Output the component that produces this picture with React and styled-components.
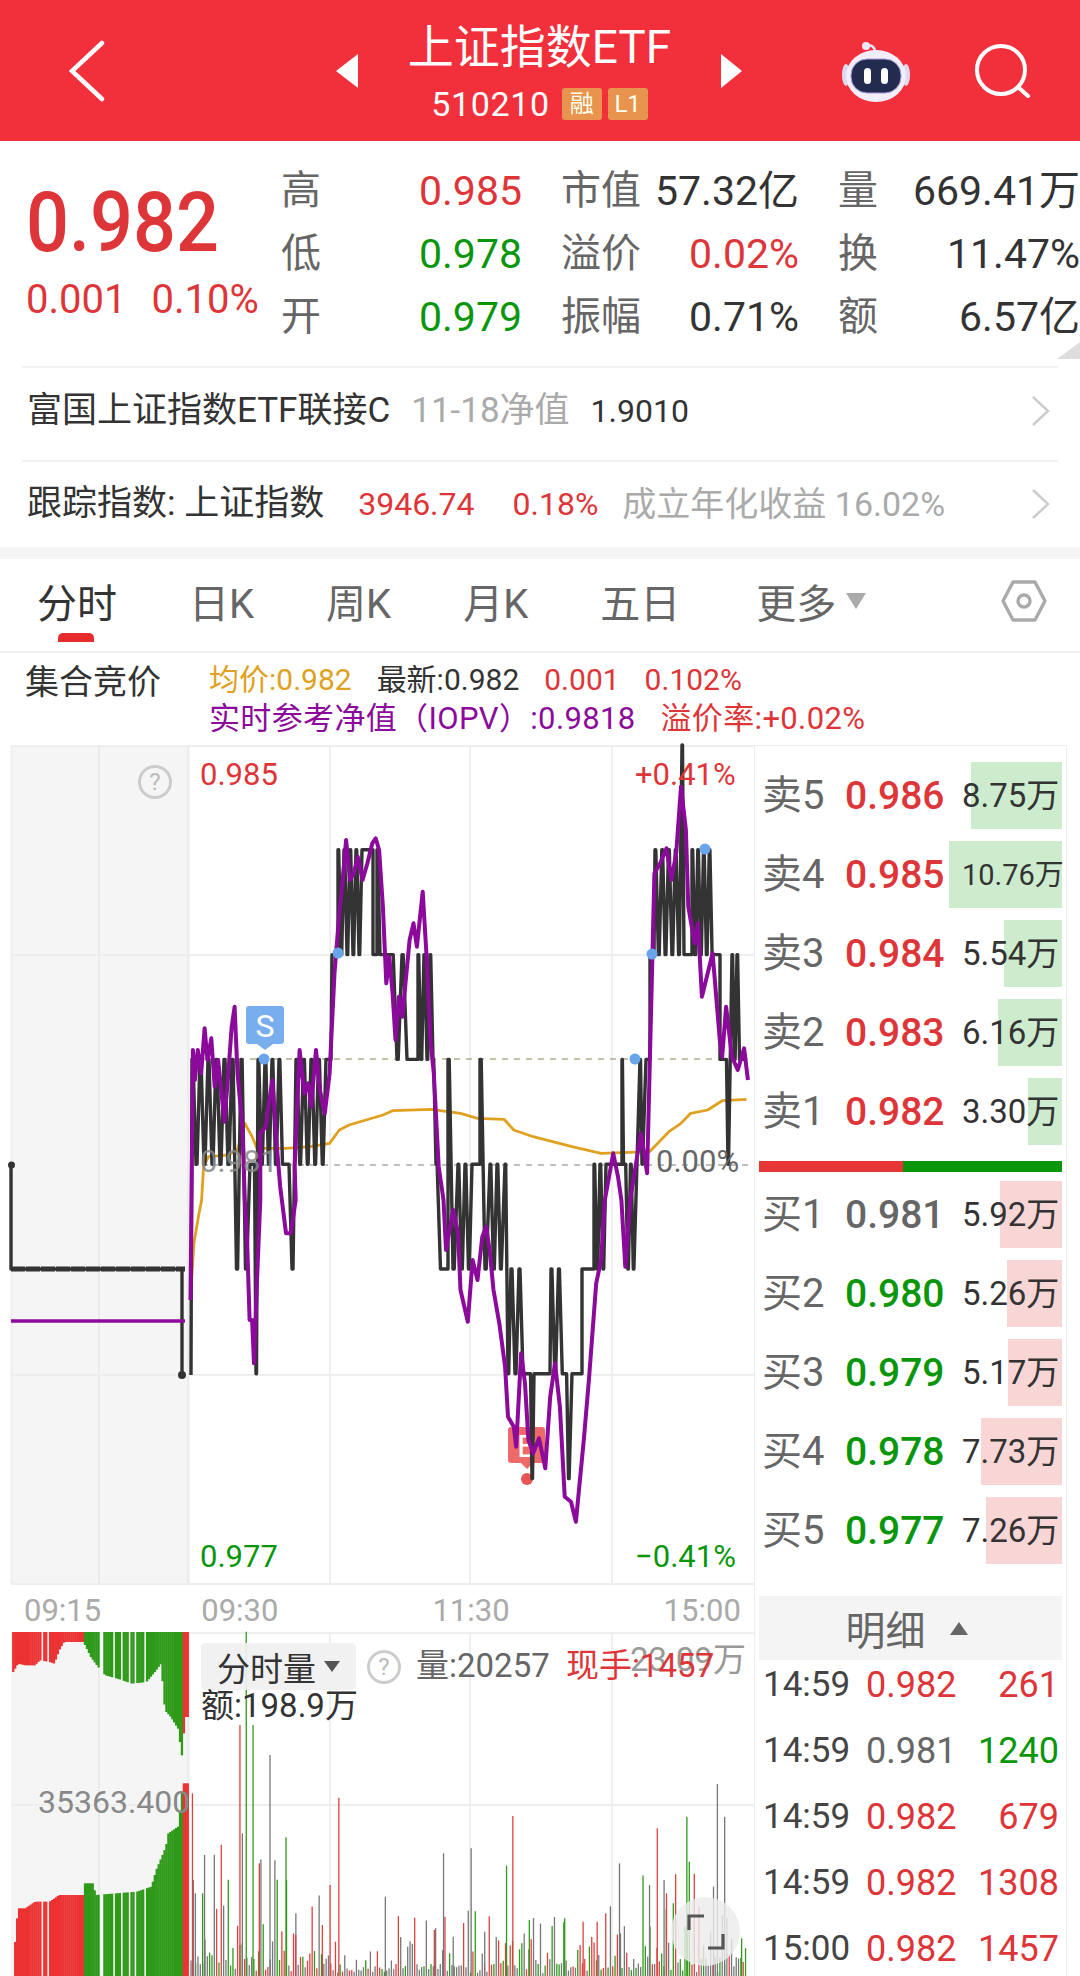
import React from "react";
import styled, { createGlobalStyle } from "styled-components";

const RED = "#dd3538";
const GREEN = "#0a960a";
const PURPLE = "#8b0a9b";
const tones = { red: RED, green: GREEN, dark: "#333", gray: "#666", mid: "#888", light: "#aaa" };

const GlobalStyle = createGlobalStyle`
  html, body { margin: 0; padding: 0; background: #fff; }
  body { font-family: Roboto, "Noto Sans CJK SC", sans-serif; }
`;

/* ---------- chart data ---------- */

const levelY = (v) => 745 + (985 - v) * 104.8;
// zoom-measured points -> page px
const upper = (pts) => pts.map(([x, y]) => [x / 2.063, 740 + y / 3]);
const lower = (pts) => pts.map(([x, y]) => [x / 2.063, 1200 + y / 3]);
const toD = (pts) => pts.map(([x, y], i) => `${i ? "L" : "M"}${x.toFixed(1)} ${y.toFixed(1)}`).join(" ");

// x0, x1, high level, low level, number of pulses (0 = flat)
const priceSegs = [
  [192, 232, 982, 981, 5], [232, 250, 982, 980, 2], [250, 254, 981, 981, 0], [254, 258, 981, 979, 1],
  [258, 286, 982, 981, 4], [288, 296, 981, 980, 1], [296, 326, 982, 981, 4], [326, 331, 982, 982, 0],
  [332, 338, 983, 983, 0], [338, 362, 984, 983, 4], [362, 373, 984, 984, 0], [373, 377, 983, 983, 0],
  [377, 383, 984, 983, 1], [383, 392, 983, 983, 0], [392, 412, 983, 982, 2], [412, 418, 982, 982, 0],
  [418, 436, 983, 982, 3], [436, 445, 981, 980, 1], [445, 448, 980, 980, 0], [448, 458, 982, 980, 1],
  [458, 472, 981, 980, 2], [472, 480, 981, 981, 0], [480, 490, 982, 980, 1], [490, 504, 981, 980, 2],
  [505, 511, 981, 979, 1], [511, 527, 980, 979, 2], [530, 534, 979, 978, 1], [534, 550, 979, 979, 0],
  [551, 566, 980, 979, 2], [566, 571, 979, 978, 1], [572, 582, 979, 979, 0], [582, 594, 980, 980, 0],
  [594, 606, 981, 980, 2], [606, 622, 981, 981, 0], [622, 625, 982, 981, 1], [625, 636, 981, 980, 2],
  [640, 644, 982, 981, 1], [646, 650, 982, 982, 0], [650, 654, 983, 983, 0], [655, 682, 984, 983, 4],
  [682, 686, 985, 983, 1], [686, 692, 983, 983, 0], [692, 715, 984, 983, 4], [716, 720, 983, 983, 0],
  [720, 725, 982, 982, 0], [726, 730, 982, 981, 1], [732, 742, 983, 982, 2], [742, 745, 982, 982, 0],
];

const pricePoints = () => {
  const pts = [[191, levelY(979)]];
  priceSegs.forEach(([x0, x1, hi, lo, n]) => {
    if (!n) {
      pts.push([x0, levelY(hi)], [x1, levelY(hi)]);
      return;
    }
    const w = (x1 - x0) / n;
    for (let i = 0; i < n; i++) {
      const x = x0 + i * w;
      pts.push([x, levelY(hi)], [x + w * 0.12, levelY(hi)], [x + w * 0.5, levelY(lo)], [x + w * 0.62, levelY(lo)]);
    }
  });
  return pts;
};

const iopvPoints = [
  ...lower([[393, 300], [395, 0]]),
  ...upper([[398, 930], [402, 1020], [408, 930], [415, 1000], [422, 865], [428, 960], [436, 895], [443, 1040], [450, 960], [463, 1145], [470, 1020], [478, 860], [484, 800], [490, 1000], [500, 1160], [505, 1380]]),
  ...lower([[510, 130], [515, 360], [520, 360], [524, 490], [530, 250], [537, 0]]),
  ...upper([[537, 1180], [548, 1160], [562, 1020], [570, 1200], [578, 1340]]),
  ...lower([[590, 100], [600, 100], [610, 0]]),
  ...upper([[608, 1280], [618, 930], [628, 1060], [636, 1030], [642, 1100], [652, 930], [660, 1050], [670, 1120], [680, 1000], [690, 700], [700, 520], [707, 420], [714, 300], [722, 420], [730, 400], [738, 350], [748, 420], [758, 370], [768, 310], [775, 295], [782, 330], [790, 500], [797, 730], [803, 650], [810, 760], [816, 900], [823, 770], [830, 830], [845, 600], [853, 550], [860, 620], [872, 455], [880, 650], [888, 900], [895, 1000], [905, 1280], [915, 1380]]),
  ...lower([[920, 150], [935, 30], [945, 100], [950, 270], [965, 365], [975, 180], [985, 240], [995, 110], [1003, 80], [1010, 150], [1018, 270], [1030, 370], [1042, 500], [1048, 650], [1060, 680], [1065, 740], [1075, 460], [1083, 550], [1090, 720], [1100, 760], [1112, 715], [1125, 805], [1135, 590], [1145, 490], [1155, 620], [1165, 890], [1178, 905], [1188, 965], [1205, 710], [1215, 540], [1230, 250], [1240, 180], [1248, 0]]),
  ...upper([[1265, 1240], [1275, 1310], [1282, 1380]]),
  ...lower([[1290, 200], [1300, 0]]),
  ...upper([[1310, 1290], [1322, 1180], [1335, 1300], [1345, 700], [1350, 400], [1362, 370], [1375, 325], [1385, 420], [1395, 340], [1405, 140], [1415, 270], [1420, 500], [1433, 610], [1440, 550], [1448, 770], [1460, 700], [1470, 640], [1485, 900], [1490, 950], [1498, 800], [1510, 950], [1522, 990], [1535, 925], [1543, 1020]]),
];

const avgPoints = [
  ...lower([[393, 300], [400, 130], [410, 45], [416, 0]]),
  ...upper([[420, 1280], [430, 1250], [470, 1245], [490, 1230], [505, 1150], [520, 1190], [530, 1225], [590, 1225], [640, 1220], [680, 1210], [700, 1170], [720, 1155], [790, 1125], [810, 1112], [890, 1108], [950, 1120], [985, 1135], [1040, 1138], [1060, 1170], [1100, 1190], [1180, 1220], [1240, 1240], [1340, 1235], [1380, 1175], [1405, 1150], [1425, 1120], [1460, 1110], [1490, 1082], [1540, 1078]]),
];

const markers = [[264, 1059], [338, 953], [635, 1059], [652, 954], [705, 849]];

// pre-market bars, measured in zoom px
const hangProfile = [[25, 215], [35, 190], [50, 195], [70, 195], [80, 180], [100, 185], [110, 190], [120, 150], [130, 125], [170, 125], [185, 170], [200, 200], [215, 225], [240, 235], [270, 250], [300, 245], [320, 210], [330, 190], [338, 330], [350, 350], [365, 385], [373, 465], [380, 350], [385, 350]];
const riseProfile = [[25, 1128], [30, 1000], [35, 925], [50, 925], [70, 905], [100, 905], [120, 885], [170, 885], [172, 850], [190, 850], [195, 885], [280, 875], [310, 860], [320, 810], [340, 740], [345, 700], [365, 680], [370, 620], [375, 550], [385, 550]];
const interp = (profile, x) => {
  for (let i = 1; i < profile.length; i++) {
    const [x0, y0] = profile[i - 1];
    const [x1, y1] = profile[i];
    if (x <= x1) return y0 + ((y1 - y0) * (x - x0)) / (x1 - x0 || 1);
  }
  return profile[profile.length - 1][1];
};
const gaps = [[83, 86], [96, 99], [204, 212], [231, 235], [246, 249], [263, 266], [276, 279], [296, 299]];
const preBars = [];
for (let X = 25; X < 386; X += 4) {
  if (gaps.some(([a, b]) => X >= a && X <= b)) continue;
  const color = X < 172 || X >= 375 ? "#ec3232" : "#2f9a1a";
  preBars.push({ x: X / 2.063, hang: 1632 + (interp(hangProfile, X) - 95) / 3, rise: 1600 + interp(riseProfile, X) / 3, color });
}

const rand = (i) => {
  const s = Math.sin(i * 12.9898) * 43758.5453;
  return s - Math.floor(s);
};
const volColors = { g: "#777", r: "#e04040", n: "#2f9a1a" };
const volBars = [];
for (let i = 0; i < 239; i++) {
  const x = 191 + i * 2.33;
  const env = x < 330 ? 1.5 : x > 640 ? 1.25 : 0.85;
  const h = (3 + Math.pow(rand(i), 4) * 75 + rand(i + 500) * 12) * env;
  const c = rand(i + 900);
  volBars.push({ x, top: 1976 - h, color: c < 0.5 ? volColors.g : c < 0.75 ? volColors.r : volColors.n });
}
const volSpikes = [
  [397, 580, "r"], [403, 880, "g"], [422, 765, "g"], [418, 880, "n"], [495, 375, "r"], [500, 700, "g"], [508, 95, "n"], [522, 375, "n"],
  [535, 790, "r"], [557, 465, "g"], [590, 712, "n"], [681, 855, "r"], [699, 593, "r"], [795, 890, "g"], [915, 760, "g"], [972, 745, "g"],
  [1045, 797, "n"], [1058, 648, "r"], [1278, 790, "g"], [1356, 685, "r"], [1417, 650, "n"], [1422, 785, "n"], [1480, 552, "g"], [1495, 650, "g"],
  [1370, 840, "g"], [1472, 860, "g"], [1165, 955, "n"], [1092, 960, "n"], [896, 990, "r"], [1203, 965, "r"], [1232, 965, "r"], [1340, 855, "g"],
  [1375, 880, "r"], [1530, 1015, "n"], [665, 975, "r"], [610, 1005, "r"], [1280, 1000, "g"], [1000, 995, "g"], [935, 1010, "g"],
];

const sellBook = [
  { label: "卖5", price: "0.986", vol: "8.75万", bar: 91 },
  { label: "卖4", price: "0.985", vol: "10.76万", bar: 113, small: true },
  { label: "卖3", price: "0.984", vol: "5.54万", bar: 58 },
  { label: "卖2", price: "0.983", vol: "6.16万", bar: 64 },
  { label: "卖1", price: "0.982", vol: "3.30万", bar: 34 },
];
const buyBook = [
  { label: "买1", price: "0.981", vol: "5.92万", bar: 62, tone: "gray" },
  { label: "买2", price: "0.980", vol: "5.26万", bar: 55 },
  { label: "买3", price: "0.979", vol: "5.17万", bar: 54 },
  { label: "买4", price: "0.978", vol: "7.73万", bar: 81 },
  { label: "买5", price: "0.977", vol: "7.26万", bar: 76 },
];
const ticks = [
  ["14:59", "0.982", "red", "261", "red"],
  ["14:59", "0.981", "gray", "1240", "green"],
  ["14:59", "0.982", "red", "679", "red"],
  ["14:59", "0.982", "red", "1308", "red"],
  ["15:00", "0.982", "red", "1457", "red"],
];
const stats = [
  [["高", "0.985", "red"], ["市值", "57.32亿", "dark"], ["量", "669.41万", "dark"]],
  [["低", "0.978", "green"], ["溢价", "0.02%", "red"], ["换", "11.47%", "dark"]],
  [["开", "0.979", "green"], ["振幅", "0.71%", "dark"], ["额", "6.57亿", "dark"]],
];

/* ---------- layout ---------- */

const Page = styled.div`
  width: 1080px;
  height: 1976px;
  overflow: hidden;
  background: #fff;
  color: #333;
`;

const Header = styled.header`
  height: 141px;
  background: #f1303c;
  display: grid;
  grid-template-columns: 336px 406px 338px;
  align-items: center;
  color: #fff;
`;
const BackIcon = styled.svg`
  width: 36px;
  height: 62px;
  margin-left: 69px;
  display: block;
`;
const Center = styled.div`
  display: flex;
  align-items: center;
  justify-content: space-between;
`;
const Triangle = styled.div`
  width: 0;
  height: 0;
  border-top: 17px solid transparent;
  border-bottom: 17px solid transparent;
  ${(p) => (p.$right ? "border-left: 21px solid #fff;" : "border-right: 22px solid #fff;")}
`;
const TitleBox = styled.div`
  display: flex;
  flex-direction: column;
  align-items: center;
`;
const Title = styled.div`
  font-size: 46px;
  line-height: 52px;
  height: 52px;
  margin-bottom: 14px;
`;
const CodeRow = styled.div`
  display: flex;
  align-items: center;
  gap: 6px;
  font-size: 34px;
  line-height: 34px;
  letter-spacing: 0.6px;
`;
const Tag = styled.span`
  width: 40px;
  height: 32px;
  border-radius: 3px;
  background: #e8944f;
  color: #ffe;
  font-size: 24px;
  letter-spacing: 0;
  line-height: 32px;
  text-align: center;
  &:first-of-type { margin-left: 6px; }
`;
const HeadRight = styled.div`
  display: flex;
  align-items: center;
  padding-left: 100px;
  gap: 65px;
`;

const Quote = styled.section`
  position: relative;
  height: 225px;
  display: flex;
  box-sizing: border-box;
`;
const PriceBox = styled.div`
  width: 281px;
  padding: 47px 0 0 26px;
  box-sizing: border-box;
`;
const BigPrice = styled.div`
  font-size: 84px;
  line-height: 70px;
  font-weight: 500;
  color: ${RED};
  transform: scaleX(0.9);
  transform-origin: left center;
`;
const ChangeRow = styled.div`
  display: flex;
  gap: 25px;
  margin-top: 20px;
  font-size: 40px;
  line-height: 44px;
  color: ${RED};
`;
const StatGrid = styled.div`
  display: grid;
  grid-template-columns: 241px 238px 242px;
  column-gap: 39px;
  grid-auto-rows: 63px;
  padding-top: 18px;
`;
const Stat = styled.div`
  display: flex;
  align-items: center;
  justify-content: space-between;
  font-size: 40px;
  line-height: 48px;
  white-space: nowrap;
`;
const StatLabel = styled.span`
  color: #666;
`;
const StatValue = styled.span`
  color: ${(p) => tones[p.$tone]};
  font-size: 41px;
`;
const CornerMark = styled.div`
  position: absolute;
  right: 0;
  bottom: 7px;
  width: 0;
  height: 0;
  border-left: 23px solid transparent;
  border-bottom: 17px solid #ddd;
`;

const InfoRow = styled.div`
  margin: 0 22px;
  height: ${(p) => p.$h}px;
  box-sizing: border-box;
  border-top: 2px solid #f1f1f1;
  display: flex;
  align-items: center;
  padding-left: 5px;
  font-size: 35px;
  line-height: 44px;
  white-space: nowrap;
  padding-bottom: ${(p) => p.$pb || 0}px;
`;
const InfoText = styled.span`
  color: ${(p) => tones[p.$tone || "dark"]};
  margin-left: ${(p) => p.$ml || 0}px;
  font-size: ${(p) => p.$size || 35}px;
`;
const RowChevron = styled.svg`
  width: 20px;
  height: 32px;
  margin-left: auto;
  margin-right: 7px;
`;
const SectionGap = styled.div`
  height: 12px;
  background: #f5f5f5;
`;

const Tabs = styled.nav`
  position: relative;
  height: 94px;
  box-sizing: border-box;
  border-bottom: 2px solid #f0f0f0;
  display: flex;
  align-items: center;
  padding: 0 33px 9px 37px;
  gap: 72px;
  font-size: 40px;
  color: #666;
`;
const Tab = styled.div`
  position: relative;
  color: ${(p) => (p.$active ? "#333" : "#666")};
  white-space: nowrap;
  display: flex;
  align-items: center;
  gap: 10px;
  margin-left: ${(p) => p.$ml || 0}px;
`;
const TabUnderline = styled.div`
  position: absolute;
  left: 21px;
  top: 61px;
  width: 36px;
  height: 9px;
  border-radius: 5px 5px 0 0;
  background: #e82c2c;
`;
const DownCaret = styled.div`
  width: 0;
  height: 0;
  border-left: 10px solid transparent;
  border-right: 10px solid transparent;
  border-top: 16px solid #aaa;
`;
const SettingsIcon = styled.svg`
  width: 46px;
  height: 44px;
  margin-left: auto;
`;

const Summary = styled.section`
  height: 92px;
  display: flex;
  padding-left: 25px;
  white-space: nowrap;
`;
const SummaryLabel = styled.div`
  width: 184px;
  font-size: 34px;
  line-height: 58px;
  color: #333;
`;
const SummaryLines = styled.div`
  padding-top: 7px;
  font-size: 30px;
  line-height: 39px;
`;
const SummaryLine = styled.div`
  display: flex;
  gap: 25px;
  font-size: ${(p) => p.$size || 30}px;
  letter-spacing: ${(p) => (p.$size ? 0.35 : 0)}px;
  text-spacing-trim: space-all;
`;
const Colored = styled.span`
  color: ${(p) => p.$c};
  margin-left: ${(p) => p.$ml || 0}px;
`;

const Main = styled.main`
  display: flex;
  padding-left: 11px;
`;
const ChartCol = styled.div`
  width: 743px;
  flex: none;
`;
const PriceChart = styled.div`
  position: relative;
  height: 840px;
  box-sizing: border-box;
`;
const Plot = styled.svg`
  display: block;
  width: 100%;
  height: 100%;
  overflow: visible;
`;
const AxisText = styled.span`
  position: absolute;
  left: ${(p) => p.$x}px;
  top: ${(p) => p.$y}px;
  font-size: 31px;
  line-height: 36px;
  white-space: nowrap;
  color: ${(p) => tones[p.$tone]};
  opacity: ${(p) => p.$fade || 1};
`;
const HelpDot = styled.div`
  position: absolute;
  left: ${(p) => p.$x}px;
  top: ${(p) => p.$y}px;
  width: 34px;
  height: 34px;
  box-sizing: border-box;
  border: 3px solid #ccc;
  border-radius: 50%;
  color: #bbb;
  font-size: 24px;
  line-height: 28px;
  text-align: center;
`;
const TimeAxis = styled.div`
  height: 47px;
  display: flex;
  align-items: center;
  font-size: 31px;
  color: #aaa;
  padding: 4px 0 0 13px;
  box-sizing: border-box;
  gap: 100px;
  span + span + span { margin-left: 54px; }
`;
const VolumeChart = styled.div`
  position: relative;
  height: 344px;
`;
const ModeButton = styled.div`
  position: absolute;
  left: 190px;
  top: 11px;
  width: 155px;
  height: 47px;
  border-radius: 5px;
  background: rgba(240, 240, 240, 0.92);
  display: flex;
  align-items: center;
  justify-content: center;
  gap: 8px;
  font-size: 33px;
  color: #333;
`;
const FloatText = styled.span`
  position: absolute;
  left: ${(p) => p.$x}px;
  top: ${(p) => p.$y}px;
  font-size: ${(p) => p.$size || 33}px;
  line-height: 40px;
  white-space: nowrap;
  color: ${(p) => p.$c};
  opacity: ${(p) => p.$fade || 1};
`;
const SmallCaret = styled.div`
  width: 0;
  height: 0;
  border-left: 8px solid transparent;
  border-right: 8px solid transparent;
  border-top: 11px solid #555;
`;
const ExpandButton = styled.div`
  position: absolute;
  left: 660px;
  top: 265px;
  width: 69px;
  height: 69px;
  border-radius: 50%;
  background: rgba(236, 236, 236, 0.82);
  display: flex;
  align-items: center;
  justify-content: center;
`;

const Side = styled.aside`
  width: 313px;
  height: 1231px;
  box-sizing: border-box;
  flex: none;
  border: 1px solid #eee;
  border-bottom: none;
  padding: 16px 4px 0 4px;
`;
const BookList = styled.div`
  display: flex;
  flex-direction: column;
  gap: 12px;
`;
const BookRow = styled.div`
  position: relative;
  height: 67px;
  display: grid;
  grid-template-columns: 86px 117px 1fr;
  align-items: center;
  line-height: 48px;
  white-space: nowrap;
`;
const DepthBar = styled.div`
  position: absolute;
  right: 0;
  top: 0;
  bottom: 0;
  background: ${(p) => (p.$side === "sell" ? "#cdebcd" : "#f9d6d6")};
`;
const BookLabel = styled.span`
  position: relative;
  padding-left: 3px;
  font-size: 40px;
  color: #666;
`;
const BookPrice = styled.span`
  position: relative;
  font-size: 39px;
  font-weight: 500;
  color: ${(p) => tones[p.$tone]};
`;
const BookVol = styled.span`
  position: relative;
  text-align: right;
  padding-right: 5px;
  font-size: ${(p) => (p.$small ? 29 : 33)}px;
  color: #333;
`;
const RatioBar = styled.div`
  height: 11px;
  margin: 16px 0 9px;
  background: linear-gradient(to right, #e63636 0 144px, #0a960a 144px);
`;
const DetailHead = styled.div`
  height: 64px;
  margin-top: 32px;
  background: #f4f4f4;
  display: flex;
  align-items: center;
  justify-content: center;
  gap: 24px;
  font-size: 40px;
  color: #666;
  padding-right: 8px;
`;
const UpCaret = styled.div`
  width: 0;
  height: 0;
  border-left: 9px solid transparent;
  border-right: 9px solid transparent;
  border-bottom: 13px solid #666;
`;
const TickList = styled.div`
  display: flex;
  flex-direction: column;
  gap: 16px;
`;
const TickRow = styled.div`
  height: 50px;
  display: flex;
  align-items: center;
  padding: 0 3px 0 4px;
  font-size: 36px;
  line-height: 44px;
  white-space: nowrap;
`;
const TickTime = styled.span`
  width: 103px;
  font-size: 35px;
  color: #444;
`;
const TickPrice = styled.span`
  color: ${(p) => tones[p.$tone]};
`;
const TickVol = styled.span`
  margin-left: auto;
  color: ${(p) => tones[p.$tone]};
`;

/* ---------- drawings ---------- */

const RobotIcon = () => (
  <svg width="68" height="62" viewBox="0 0 68 62">
    <path d="M25 8 C28 2 34 8 33 14" fill="none" stroke="#e8e4f5" strokeWidth="2.5" />
    <circle cx="24" cy="6" r="4" fill="#ece8f8" />
    <ellipse cx="4" cy="35" rx="4" ry="11" fill="#dcd8f0" />
    <ellipse cx="64" cy="35" rx="4" ry="11" fill="#dcd8f0" />
    <ellipse cx="34" cy="36" rx="30" ry="26" fill="#f1eefa" />
    <rect x="9" y="19" width="50" height="34" rx="16" fill="#232c4e" stroke="#a99be0" strokeWidth="1" />
    <rect x="22" y="28" width="7" height="16" rx="3.5" fill="#fff" />
    <rect x="39" y="28" width="7" height="16" rx="3.5" fill="#fff" />
  </svg>
);

const SearchIcon = () => (
  <svg width="56" height="54" viewBox="0 0 56 54" fill="none" stroke="#fff" strokeWidth="4">
    <circle cx="26" cy="26" r="24" />
    <path d="M43 43 L53 52" strokeLinecap="round" />
  </svg>
);

const GridLines = ({ y0, y1 }) => (
  <g stroke="#e4e4e4" strokeWidth="1.2">
    {[99, 330, 470, 612].map((x) => (
      <line key={x} x1={x} x2={x} y1={y0} y2={y1} />
    ))}
  </g>
);

const PricePlot = () => (
  <Plot viewBox="11 745 743 840">
    <rect x="11" y="745" width="178" height="840" fill="#f5f5f5" />
    <rect x="187" y="745" width="2.5" height="840" fill="#ececec" />
    <GridLines y0={745} y1={1585} />
    <g stroke="#eee" strokeWidth="2">
      <line x1="11" x2="754" y1="746" y2="746" />
      <line x1="11" x2="754" y1="955" y2="955" />
      <line x1="11" x2="754" y1="1375" y2="1375" />
      <line x1="11" x2="754" y1="1584" y2="1584" />
      <line x1="11.5" x2="11.5" y1="745" y2="1585" />
    </g>
    <line x1="190" x2="754" y1="1059" y2="1059" stroke="#b5ad8a" strokeWidth="1.6" strokeDasharray="6 6" />
    <line x1="190" x2="754" y1="1165" y2="1165" stroke="#aaa" strokeWidth="1.6" strokeDasharray="6 6" />

    <path d="M511 1427 h31 a3 3 0 0 1 3 3 v30 a3 3 0 0 1 -3 3 h-9 l-6 6 l-6 -6 h-10 a3 3 0 0 1 -3 -3 v-30 a3 3 0 0 1 3 -3z" fill="#ee6a6a" />
    <text x="527" y="1457" textAnchor="middle" fontSize="32" fill="#fff" fontFamily="Roboto">B</text>
    <circle cx="527" cy="1479" r="6" fill="#e85555" />

    <path d={toD(avgPoints)} fill="none" stroke="#e0a020" strokeWidth="2.8" strokeLinejoin="round" />
    <path d={`M11 1165 V1269 H182 V1375 M191 1375 ${toD(pricePoints()).replace("M", "L")}`} fill="none" stroke="#333" strokeWidth="3.4" strokeLinejoin="round" />
    <circle cx="11.5" cy="1165" r="3.5" fill="#333" />
    <circle cx="182" cy="1375" r="4" fill="#333" />
    <line x1="11" x2="185" y1="1269" y2="1269" stroke="#333" strokeWidth="5" strokeDasharray="14 1" />
    <line x1="11" x2="185" y1="1321" y2="1321" stroke={PURPLE} strokeWidth="3.6" />
    <path d={toD(iopvPoints)} fill="none" stroke={PURPLE} strokeWidth="4" strokeLinejoin="round" />

    {markers.map(([x, y]) => (
      <circle key={x} cx={x} cy={y} r="5.5" fill="#6aa5ec" />
    ))}
    <path d="M249 1006 h32 a3 3 0 0 1 3 3 v32 a3 3 0 0 1 -3 3 h-8 l-8 6 l-8 -6 h-8 a3 3 0 0 1 -3 -3 v-32 a3 3 0 0 1 3 -3z" fill="#78aeee" />
    <text x="265" y="1037" textAnchor="middle" fontSize="32" fill="#fff" fontFamily="Roboto">S</text>
  </Plot>
);

const VolumePlot = () => (
  <Plot viewBox="11 1632 743 344">
    <rect x="11" y="1632" width="178" height="344" fill="#f5f5f5" />
    <rect x="187" y="1632" width="2.5" height="344" fill="#ececec" />
    <GridLines y0={1632} y1={1976} />
    <line x1="11" x2="754" y1="1805" y2="1805" stroke="#eee" strokeWidth="2" />
    <line x1="11" x2="754" y1="1633" y2="1633" stroke="#eee" strokeWidth="2" />
    {preBars.map((b) => (
      <g key={b.x} fill={b.color}>
        <rect x={b.x} y={1632} width="2.3" height={Math.max(b.hang - 1632, 0)} />
        <rect x={b.x} y={b.rise} width="2.3" height={1976 - b.rise} />
      </g>
    ))}
    {volBars.map((b) => (
      <line key={b.x} x1={b.x} x2={b.x} y1={b.top} y2={1976} stroke={b.color} strokeWidth="1.3" />
    ))}
    {volSpikes.map(([x, y, c]) => (
      <line key={x} x1={x / 2.063} x2={x / 2.063} y1={1600 + y / 3} y2={1976} stroke={volColors[c]} strokeWidth="1.3" />
    ))}
  </Plot>
);

const Book = ({ rows, side, tone }) => (
  <BookList>
    {rows.map((r) => (
      <BookRow key={r.label}>
        <DepthBar $side={side} style={{ width: r.bar }} />
        <BookLabel>{r.label}</BookLabel>
        <BookPrice $tone={r.tone || tone}>{r.price}</BookPrice>
        <BookVol $small={r.small}>{r.vol}</BookVol>
      </BookRow>
    ))}
  </BookList>
);

export default function App() {
  return (
    <Page>
      <GlobalStyle />
      <Header>
        <BackIcon viewBox="0 0 36 62" fill="none" stroke="#fff" strokeWidth="4.5" strokeLinecap="round">
          <path d="M33 3 L3 31 L33 59" />
        </BackIcon>
        <Center>
          <Triangle />
          <TitleBox>
            <Title>上证指数ETF</Title>
            <CodeRow>
              510210
              <Tag>融</Tag>
              <Tag>L1</Tag>
            </CodeRow>
          </TitleBox>
          <Triangle $right />
        </Center>
        <HeadRight>
          <RobotIcon />
          <SearchIcon />
        </HeadRight>
      </Header>

      <Quote>
        <PriceBox>
          <BigPrice>0.982</BigPrice>
          <ChangeRow>
            <span>0.001</span>
            <span>0.10%</span>
          </ChangeRow>
        </PriceBox>
        <StatGrid>
          {stats.flat().map(([label, value, tone]) => (
            <Stat key={label}>
              <StatLabel>{label}</StatLabel>
              <StatValue $tone={tone}>{value}</StatValue>
            </Stat>
          ))}
        </StatGrid>
        <CornerMark />
      </Quote>

      <InfoRow $h={94} $pb={6}>
        <InfoText>富国上证指数ETF联接C</InfoText>
        <InfoText $tone="light" $ml={21}>11-18净值</InfoText>
        <InfoText $size={32} $ml={21}>1.9010</InfoText>
        <RowChevron viewBox="0 0 20 32" fill="none" stroke="#ccc" strokeWidth="2.5">
          <path d="M2 2 L17 16 L2 30" />
        </RowChevron>
      </InfoRow>
      <InfoRow $h={87} $pb={2}>
        <InfoText>跟踪指数: 上证指数</InfoText>
        <InfoText $tone="red" $size={32} $ml={34}>3946.74</InfoText>
        <InfoText $tone="red" $size={32} $ml={38}>0.18%</InfoText>
        <InfoText $tone="light" $size={34} $ml={24}>成立年化收益 16.02%</InfoText>
        <RowChevron viewBox="0 0 20 32" fill="none" stroke="#ccc" strokeWidth="2.5">
          <path d="M2 2 L17 16 L2 30" />
        </RowChevron>
      </InfoRow>
      <SectionGap />

      <Tabs>
        <Tab $active>
          分时
          <TabUnderline />
        </Tab>
        <Tab>日K</Tab>
        <Tab>周K</Tab>
        <Tab>月K</Tab>
        <Tab>五日</Tab>
        <Tab $ml={4}>
          更多
          <DownCaret />
        </Tab>
        <SettingsIcon viewBox="0 0 46 44" fill="none" stroke="#aaa" strokeWidth="3.4">
          <path d="M12 3 H34 L44 22 L34 41 H12 L2 22 Z" strokeLinejoin="round" />
          <circle cx="23" cy="22" r="6" />
        </SettingsIcon>
      </Tabs>

      <Summary>
        <SummaryLabel>集合竞价</SummaryLabel>
        <SummaryLines>
          <SummaryLine>
            <Colored $c="#e0a020">均价:0.982</Colored>
            <Colored $c="#333">最新:0.982</Colored>
            <Colored $c={RED}>0.001</Colored>
            <Colored $c={RED}>0.102%</Colored>
          </SummaryLine>
          <SummaryLine $size={31}>
            <Colored $c={PURPLE}>实时参考净值（IOPV）:0.9818</Colored>
            <Colored $c={RED}>溢价率:+0.02%</Colored>
          </SummaryLine>
        </SummaryLines>
      </Summary>

      <Main>
        <ChartCol>
          <PriceChart>
            <PricePlot />
            <HelpDot $x={127} $y={20}>?</HelpDot>
            <AxisText $x={189} $y={12} $tone="red">0.985</AxisText>
            <AxisText $x={624} $y={12} $tone="red">+0.41%</AxisText>
            <AxisText $x={189} $y={399} $tone="mid" $fade={0.85}>0.981</AxisText>
            <AxisText $x={645} $y={399} $tone="gray">0.00%</AxisText>
            <AxisText $x={189} $y={794} $tone="green">0.977</AxisText>
            <AxisText $x={624} $y={794} $tone="green">−0.41%</AxisText>
          </PriceChart>
          <TimeAxis>
            <span>09:15</span>
            <span>09:30</span>
            <span>11:30</span>
            <span>15:00</span>
          </TimeAxis>
          <VolumeChart>
            <VolumePlot />
            <FloatText $x={27} $y={150} $c="#888" $size={32}>35363.400</FloatText>
            <ModeButton>
              分时量
              <SmallCaret />
            </ModeButton>
            <HelpDot $x={356} $y={18}>?</HelpDot>
            <FloatText $x={405} $y={14} $c="#666">量:20257</FloatText>
            <FloatText $x={619} $y={8} $c="#999">23.09万</FloatText>
            <FloatText $x={555} $y={14} $c={RED}>现手:1457</FloatText>
            <FloatText $x={190} $y={54} $c="#333">额:198.9万</FloatText>
            <ExpandButton>
              <svg width="38" height="36" viewBox="0 0 38 36" fill="none" stroke="#555" strokeWidth="3.2">
                <path d="M2 16 V2 H17" />
                <path d="M36 20 V34 H21" />
              </svg>
            </ExpandButton>
          </VolumeChart>
        </ChartCol>

        <Side>
          <Book rows={sellBook} side="sell" tone="red" />
          <RatioBar />
          <Book rows={buyBook} side="buy" tone="green" />
          <DetailHead>
            明细
            <UpCaret />
          </DetailHead>
          <TickList>
            {ticks.map(([time, price, pt, vol, vt], i) => (
              <TickRow key={i}>
                <TickTime>{time}</TickTime>
                <TickPrice $tone={pt}>{price}</TickPrice>
                <TickVol $tone={vt}>{vol}</TickVol>
              </TickRow>
            ))}
          </TickList>
        </Side>
      </Main>
    </Page>
  );
}
